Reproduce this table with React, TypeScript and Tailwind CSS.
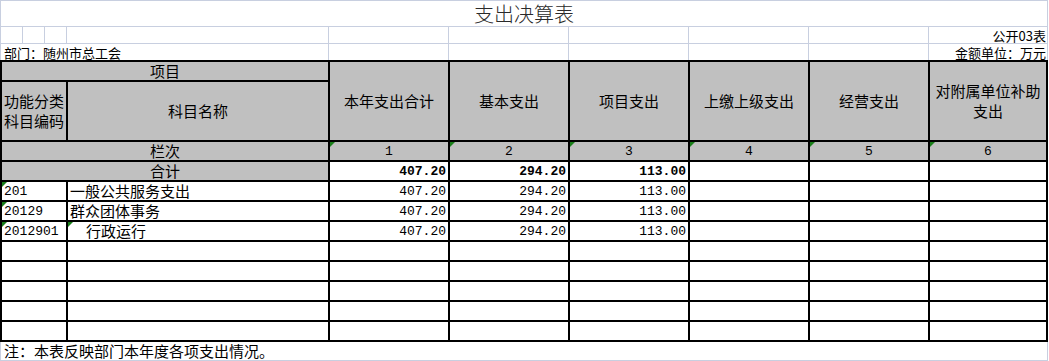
const cjk = "font-['Noto_Sans_CJK_SC',sans-serif]";
const mono = "font-['Liberation_Mono','Noto_Sans_CJK_SC',monospace]";

const rows = [
  { code: "201", name: "一般公共服务支出", indent: false, vals: ["407.20", "294.20", "113.00"] },
  { code: "20129", name: "群众团体事务", indent: false, vals: ["407.20", "294.20", "113.00"] },
  { code: "2012901", name: "行政运行", indent: true, vals: ["407.20", "294.20", "113.00"] },
];

const heads = ["本年支出合计", "基本支出", "项目支出", "上缴上级支出", "经营支出"];

function Flag() {
  return (
    <span className="absolute left-0 top-0 h-0 w-0 border-r-[5px] border-t-[5px] border-r-transparent border-t-[#1a7f1a]" />
  );
}

function Head({ children }: { children: React.ReactNode }) {
  return (
    <div className="row-span-2 flex items-center justify-center bg-[#c0c0c0] text-center text-[15px] leading-[20px]">
      {children}
    </div>
  );
}

export default function App() {
  return (
    <div className={`w-[1049px] bg-white text-black ${cjk}`}>
      {/* sheet top: light gridlines */}
      <div className="grid w-[1048px] grid-cols-[21px_21px_21px_261px_119px_119px_119px_119px_119px_118px] grid-rows-[25px_16px_16px] gap-px bg-[#c8cfe0] px-px pt-px">
        <div className="col-span-10 flex items-center justify-center bg-white text-[20px] leading-none text-[#2a2a2a] font-light">
          支出决算表
        </div>
        {Array.from({ length: 9 }).map((_, i) => (
          <div key={i} className="bg-white" />
        ))}
        <div className="flex items-end justify-end whitespace-nowrap bg-white pr-[1px] text-[13px] leading-[15px]">
          公开03表
        </div>
        <div className="col-span-4 flex items-end whitespace-nowrap bg-white pl-[3px] text-[13px] leading-[15px]">
          部门：随州市总工会
        </div>
        {Array.from({ length: 5 }).map((_, i) => (
          <div key={i} className="bg-white" />
        ))}
        <div className="flex items-end justify-end whitespace-nowrap bg-white pr-[1px] text-[13px] leading-[15px]">
          金额单位：万元
        </div>
      </div>

      {/* table: black borders */}
      <div className="grid w-[1048px] grid-cols-[64px_260px_118px_118px_118px_118px_118px_116px] grid-rows-[18px_58px_repeat(10,18px)] gap-[2px] bg-black p-[2px]">
        <div className="col-span-2 flex items-center justify-center bg-[#c0c0c0] text-[15px] leading-[18px]">项目</div>
        <Head>本年支出合计</Head>
        {heads.slice(1).map((h) => (
          <Head key={h}>{h}</Head>
        ))}
        <Head>
          对附属单位补助
          <br />
          支出
        </Head>
        <div className="flex items-center justify-center bg-[#c0c0c0] text-center text-[15px] leading-[20px]">
          功能分类
          <br />
          科目编码
        </div>
        <div className="flex items-center justify-center bg-[#c0c0c0] text-[15px]">科目名称</div>

        <div className="col-span-2 flex items-end justify-center bg-[#c0c0c0] text-[15px] leading-[18px]">栏次</div>
        {[1, 2, 3, 4, 5, 6].map((n) => (
          <div key={n} className={`relative flex items-end justify-center bg-[#c0c0c0] text-[13px] leading-[17px] ${mono}`}>
            <Flag />
            {n}
          </div>
        ))}

        <div className="col-span-2 flex items-end justify-center bg-[#c0c0c0] text-[15px] leading-[18px]">合计</div>
        {rows[0].vals.map((v, i) => (
          <div key={i} className={`flex items-end justify-end bg-white pr-[2px] text-[13px] font-bold leading-[17px] ${mono}`}>
            {v}
          </div>
        ))}
        <div className="bg-white" />
        <div className="bg-white" />
        <div className="bg-white" />

        {rows.map((r) => (
          <div key={r.code} className="contents">
            <div className={`relative flex items-end bg-white pl-[2px] text-[13px] leading-[17px] ${mono}`}>
              <Flag />
              {r.code}
            </div>
            <div
              className={`relative flex items-end whitespace-nowrap bg-white text-[15px] leading-[18px] ${r.indent ? "pl-[18px]" : "pl-[2px]"}`}
            >
              {r.indent && <Flag />}
              {r.name}
            </div>
            {r.vals.map((v, i) => (
              <div key={i} className={`flex items-end justify-end bg-white pr-[2px] text-[13px] leading-[17px] ${mono}`}>
                {v}
              </div>
            ))}
            <div className="bg-white" />
            <div className="bg-white" />
            <div className="bg-white" />
          </div>
        ))}

        {Array.from({ length: 40 }).map((_, i) => (
          <div key={i} className="bg-white" />
        ))}
      </div>

      {/* note */}
      <div className="flex h-[19px] w-[1048px] items-end border-x border-b border-[#c8cfe0] pl-[3px] text-[15px] leading-[18px]">
        注：本表反映部门本年度各项支出情况。
      </div>
    </div>
  );
}
